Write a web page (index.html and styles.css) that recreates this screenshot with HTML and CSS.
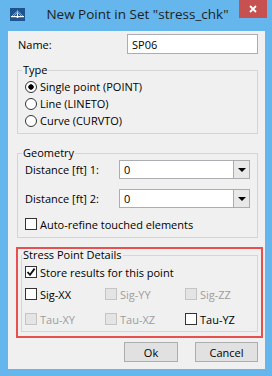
FILE: index.html
```html
<!DOCTYPE html>
<html lang="en">

<head>
    <meta charset="UTF-8">
    <title>New Point in Set</title>
    <link rel="stylesheet" href="styles.css">
</head>

<body>
    <div class="titlebar">
        <svg class="app-icon" width="15" height="13" viewBox="0 0 15 13">
            <rect width="15" height="13" fill="#1d548f" />
            <path d="M7.5 1.5 L8.3 10 L6.7 10 Z" fill="#fff" />
            <path d="M7.5 3 L2 8 M7.5 3 L13 8 M7.5 4.5 L4 8 M7.5 4.5 L11 8" stroke="#cfe3f5" stroke-width="0.6" />
            <rect x="1" y="8" width="13" height="1.2" fill="#fff" />
        </svg>
        <div class="title">New Point in Set "stress_chk"</div>
        <button class="close">
            <svg width="8" height="8" viewBox="0 0 8 8">
                <path d="M1 1 L7 7 M7 1 L1 7" stroke="#fff" stroke-width="1.8" />
            </svg>
        </button>
    </div>

    <div class="panel">
        <div class="name-row">
            <label>Name:</label>
            <input class="textbox" type="text" value="SP06">
        </div>

        <fieldset class="group type-group">
            <legend>Type</legend>
            <div class="option"><span class="radio checked"></span>Single point (POINT)</div>
            <div class="option"><span class="radio"></span>Line (LINETO)</div>
            <div class="option"><span class="radio"></span>Curve (CURVTO)</div>
        </fieldset>

        <fieldset class="group geometry">
            <legend>Geometry</legend>
            <div class="field">
                <label>Distance [ft] 1:</label>
                <div class="combo">
                    <input type="text" value="0">
                    <span class="drop"></span>
                </div>
            </div>
            <div class="field">
                <label>Distance [ft] 2:</label>
                <div class="combo">
                    <input type="text" value="0">
                    <span class="drop"></span>
                </div>
            </div>
            <div class="option refine"><span class="check"></span>Auto-refine touched elements</div>
        </fieldset>

        <div class="highlight">
            <fieldset class="group stress">
                <legend>Stress Point Details</legend>
                <div class="option store">
                    <span class="check">
                        <svg width="10" height="10" viewBox="0 0 10 10">
                            <path d="M1.5 5 L4 7.8 L8.6 1.6" fill="none" stroke="#111" stroke-width="1.8" />
                        </svg>
                    </span>Store results for this point
                </div>
                <div class="stress-grid">
                    <div class="option"><span class="check"></span>Sig-XX</div>
                    <div class="option disabled"><span class="check"></span>Sig-YY</div>
                    <div class="option disabled"><span class="check"></span>Sig-ZZ</div>
                    <div class="option disabled"><span class="check"></span>Tau-XY</div>
                    <div class="option disabled"><span class="check"></span>Tau-XZ</div>
                    <div class="option"><span class="check"></span>Tau-YZ</div>
                </div>
            </fieldset>
        </div>

        <div class="actions">
            <button class="btn ok">Ok</button>
            <button class="btn cancel">Cancel</button>
        </div>
    </div>
</body>

</html>
```

FILE: styles.css
```css
* {
    box-sizing: border-box;
}

body {
    margin: 0;
    width: 272px;
    height: 376px;
    overflow: hidden;
    background-color: #64b6ec;
    font-family: 'Open Sans', 'Noto Sans', sans-serif;
    font-size: 11px;
    color: #000;
}

/* barra de título */
.titlebar {
    display: grid;
    grid-template-columns: 26px 1fr 28px;
    height: 31px;
    padding: 0 5px 0 10px;
}

.app-icon {
    align-self: center;
    margin-top: -2px;
}

.title {
    align-self: center;
    margin-top: -3px;
    text-align: center;
    white-space: nowrap;
    font-size: 13.5px;
    color: #1f1f1f;
}

.close {
    align-self: start;
    height: 18px;
    padding: 0;
    border: none;
    background-color: #c75050;
    display: flex;
    align-items: center;
    justify-content: center;
}

/* conteúdo */
.panel {
    display: flex;
    flex-direction: column;
    height: 338px;
    margin: 0 7px 0 8px;
    padding: 3px 7px 0 9px;
    background-color: #f0f0f0;
}

.name-row {
    display: flex;
    align-items: center;
    justify-content: space-between;
    height: 20px;
}

.name-row label {
    padding-left: 1px;
}

.textbox {
    width: 131px;
    height: 20px;
    padding: 0 4px;
    border: 1px solid #abadb3;
    background-color: #fff;
    font: inherit;
    color: #000;
}

.group {
    min-width: 0;
    margin: 0;
    padding: 1px 7px 4px 7px;
    border: 1px solid #d5d5d5;
}

.group legend {
    margin-left: -3px;
    padding: 0 1px;
    line-height: 14px;
}

.type-group {
    margin-top: 9px;
}

.option {
    display: flex;
    align-items: center;
    gap: 3px;
    height: 17px;
    white-space: nowrap;
}

.radio {
    width: 12px;
    height: 12px;
    border: 1px solid #333;
    border-radius: 50%;
    background-color: #fff;
}

.radio.checked {
    background: radial-gradient(circle, #000 2.4px, #fff 3px);
}

.check {
    display: flex;
    align-items: center;
    justify-content: center;
    width: 12px;
    height: 12px;
    border: 1px solid #333;
    background-color: #fff;
}

.geometry {
    margin-top: 12px;
    padding-top: 0;
    padding-bottom: 5px;
}

.field {
    display: flex;
    align-items: center;
    height: 19px;
    margin-bottom: 10px;
}

.field label {
    width: 94px;
}

.combo {
    display: flex;
    width: 131px;
    height: 19px;
}

.combo input {
    width: 115px;
    height: 19px;
    padding: 0 4px;
    border: 1px solid #abadb3;
    background-color: #fff;
    font: inherit;
}

.drop {
    display: flex;
    align-items: center;
    justify-content: center;
    width: 16px;
    border: 1px solid #acacac;
    border-left: none;
    background-color: #e8e8e8;
}

.drop::after {
    content: "";
    border-left: 4px solid transparent;
    border-right: 4px solid transparent;
    border-top: 4px solid #000;
}

.refine {
    margin-top: -2px;
    height: 16px;
}

/* destaque vermelho */
.highlight {
    margin: 9px -5px 0 -1px;
    padding: 0 3px 4px 3px;
    border: 2px solid #e8504f;
}

.stress {
    margin-top: -1px;
    padding: 2px 4px 4px 3px;
}

.store {
    height: 16px;
}

.stress-grid {
    display: grid;
    grid-template-columns: 80px 80px 1fr;
    row-gap: 9px;
    margin-top: 6px;
}

.stress-grid .option {
    height: 16px;
}

.disabled {
    color: #9d9d9d;
}

.disabled .check {
    border-color: #c4c4c4;
    background-color: #e4e4e4;
}

.actions {
    display: flex;
    justify-content: flex-end;
    gap: 17px;
    margin-top: 4px;
}

.btn {
    height: 20px;
    padding: 0;
    border: 1px solid #adadad;
    background-color: #e1e1e1;
    font: inherit;
    color: #000;
}

.ok {
    width: 54px;
}

.cancel {
    width: 63px;
}
```
